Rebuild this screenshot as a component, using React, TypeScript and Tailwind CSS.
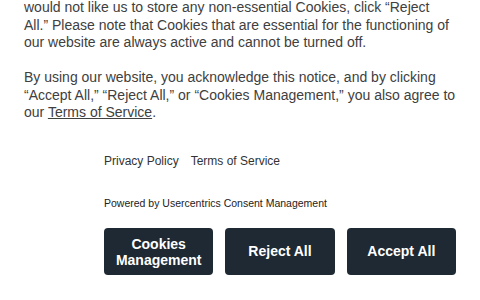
export default function App() {
  return (
    <div className="w-[480px] h-[300px] overflow-hidden bg-white" style={{ fontFamily: '"Liberation Sans", Arial, sans-serif' }}>
      <div className="ml-[24px] w-[432px] -mt-[1px] text-[14px] leading-[17.5px] text-[#404040]">
        <p>
          would not like us to store any non-essential Cookies, click “Reject All.” Please note that Cookies that are essential for the functioning of our website are always active and cannot be turned off.
        </p>
        <p className="mt-[17.5px]">
          By using our website, you acknowledge this notice, and by clicking “Accept All,” “Reject All,” or “Cookies Management,” you also agree to our <span className="underline">Terms of Service</span>.
        </p>
      </div>

      <div className="ml-[104px] w-[352px]">
        <div className="mt-[30px] flex gap-3 text-[12px] text-[#333333]">
          <span>Privacy Policy</span>
          <span>Terms of Service</span>
        </div>
        <div className="mt-[26px] text-[10.5px] text-[#222222]">Powered by Usercentrics Consent Management</div>
        <div className="mt-[17px] grid grid-cols-3 gap-3">
          <button className="h-[47px] rounded bg-[#1e2933] text-white text-[14px] font-bold leading-[16px]">
            Cookies<br />Management
          </button>
          <button className="h-[47px] rounded bg-[#1e2933] text-white text-[14px] font-bold">Reject All</button>
          <button className="h-[47px] rounded bg-[#1e2933] text-white text-[14px] font-bold">Accept All</button>
        </div>
      </div>
    </div>
  );
}
